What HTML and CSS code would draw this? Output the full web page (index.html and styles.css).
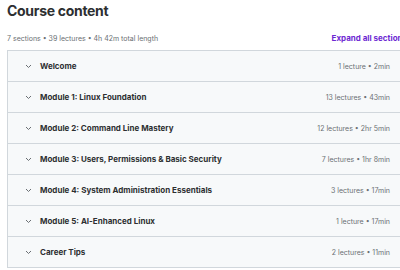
FILE: index.html
```html
<!DOCTYPE html>
<html>
<head>
<meta charset="utf-8">
<link rel="stylesheet" href="styles.css">
</head>
<body>
<div class="page">
  <h2 class="title">Course content</h2>
  <div class="summary">
    <span class="stats">7 sections • 39 lectures • 4h 42m total length</span>
    <span class="expand">Expand all sections</span>
  </div>
  <div class="sections">
    <div class="row"><svg class="chev" width="7" height="5" viewBox="0 0 7 5"><path d="M1 1l2.5 2.5L6 1" fill="none" stroke="#6a6f73" stroke-width="1"/></svg><span class="name">Welcome</span><span class="meta">1 lecture • 2min</span></div>
    <div class="row"><svg class="chev" width="7" height="5" viewBox="0 0 7 5"><path d="M1 1l2.5 2.5L6 1" fill="none" stroke="#6a6f73" stroke-width="1"/></svg><span class="name">Module 1: Linux Foundation</span><span class="meta">13 lectures • 43min</span></div>
    <div class="row"><svg class="chev" width="7" height="5" viewBox="0 0 7 5"><path d="M1 1l2.5 2.5L6 1" fill="none" stroke="#6a6f73" stroke-width="1"/></svg><span class="name">Module 2: Command Line Mastery</span><span class="meta">12 lectures • 2hr 5min</span></div>
    <div class="row"><svg class="chev" width="7" height="5" viewBox="0 0 7 5"><path d="M1 1l2.5 2.5L6 1" fill="none" stroke="#6a6f73" stroke-width="1"/></svg><span class="name">Module 3: Users, Permissions &amp; Basic Security</span><span class="meta">7 lectures • 1hr 8min</span></div>
    <div class="row"><svg class="chev" width="7" height="5" viewBox="0 0 7 5"><path d="M1 1l2.5 2.5L6 1" fill="none" stroke="#6a6f73" stroke-width="1"/></svg><span class="name">Module 4: System Administration Essentials</span><span class="meta">3 lectures • 17min</span></div>
    <div class="row"><svg class="chev" width="7" height="5" viewBox="0 0 7 5"><path d="M1 1l2.5 2.5L6 1" fill="none" stroke="#6a6f73" stroke-width="1"/></svg><span class="name">Module 5: AI-Enhanced Linux</span><span class="meta">1 lecture • 17min</span></div>
    <div class="row"><svg class="chev" width="7" height="5" viewBox="0 0 7 5"><path d="M1 1l2.5 2.5L6 1" fill="none" stroke="#6a6f73" stroke-width="1"/></svg><span class="name">Career Tips</span><span class="meta">2 lectures • 11min</span></div>
  </div>
</div>
</body>
</html>
```
FILE: styles.css
```css
html, body {
  margin: 0;
  padding: 0;
  background: #ffffff;
  overflow: hidden;
}
body {
  font-family: "Inter", "Liberation Sans", sans-serif;
  color: #2d2f31;
  width: 400px;
  height: 270px;
}
.page {
  width: 400px;
  margin-left: 7px;
  padding-top: 1px;
}
.title {
  margin: 0;
  font-size: 14px;
  font-weight: 700;
  line-height: 20px;
  letter-spacing: -0.3px;
}
.summary {
  display: flex;
  justify-content: space-between;
  align-items: center;
  margin-top: 12px;
  height: 10px;
  margin-bottom: 7px;
}
.stats {
  font-size: 7px;
  color: #6a6f73;
}
.expand {
  font-size: 8px;
  font-weight: 700;
  color: #6d28d2;
}
.sections {
  border: 1px solid #d1d7dc;
  border-right: none;
}
.row {
  display: flex;
  align-items: center;
  height: 30px;
  background: #f7f9fa;
  border-bottom: 1px solid #d1d7dc;
  padding: 0 17px 0 16px;
}
.row:last-child {
  border-bottom: none;
}
.chev {
  margin-right: 8px;
  margin-left: 1px;
}
.name {
  font-size: 8px;
  font-weight: 700;
  flex: 1;
}
.meta {
  font-size: 7px;
  color: #6a6f73;
}
```
